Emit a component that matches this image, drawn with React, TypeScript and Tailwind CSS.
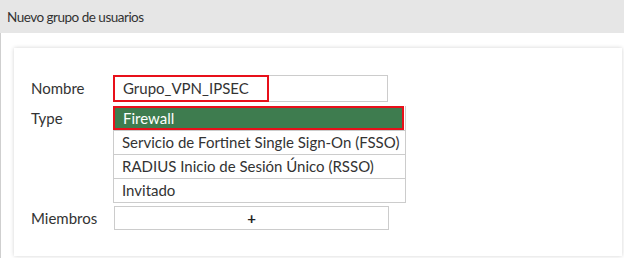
export default function App() {
  const rows = [
    "Servicio de Fortinet Single Sign-On (FSSO)",
    "RADIUS Inicio de Sesión Único (RSSO)",
    "Invitado",
  ];
  return (
    <div className="w-[624px] h-[258px] overflow-hidden bg-white text-[15px] text-[#333] font-['Lato','Liberation_Sans',sans-serif]">
      <div className="h-[33px] bg-[#e6e6e6] flex items-center pl-[7px] pt-[1px] text-[13.5px] tracking-[-0.5px] text-[#333]">
        Nuevo grupo de usuarios
      </div>
      <div className="h-[225px] border-l border-[#cfcfcf] pl-[13px] pr-[2px] pt-[15px] bg-white">
        <div className="h-[208px] bg-white shadow-[0_0_4px_rgba(0,0,0,0.18)] pl-[17px] pt-[27px]">
          <div className="flex items-center h-[27px]">
            <div className="w-[82px]">Nombre</div>
            <div className="relative w-[275px] h-[27px] border border-[#cccccc] flex items-center pl-[9px]">
              <div className="absolute -left-px -top-px w-[156px] h-[27px] border-2 border-[#e8101a]"></div>
              <span className="relative">Grupo_VPN_IPSEC</span>
            </div>
          </div>
          <div className="flex mt-[4px]">
            <div className="w-[82px] h-[24px] flex items-center">Type</div>
            <div className="w-[293px] border border-[#cccccc] border-t-0">
              <div className="h-[24px] bg-[#3e7c4f] text-white flex items-center pl-[8px] border-2 border-[#e8101a] -ml-px mr-px">
                Firewall
              </div>
              {rows.map((r) => (
                <div key={r} className="h-[24px] border-t border-[#cccccc] first:border-t-0 flex items-center pl-[8px] whitespace-nowrap">
                  {r}
                </div>
              ))}
            </div>
          </div>
          <div className="flex items-center mt-[3px]">
            <div className="w-[82px]">Miembros</div>
            <div className="w-[275px] h-[24px] border border-[#cccccc] flex items-center justify-center font-bold text-[15px] text-[#222] ml-px">
              +
            </div>
          </div>
        </div>
      </div>
    </div>
  );
}
